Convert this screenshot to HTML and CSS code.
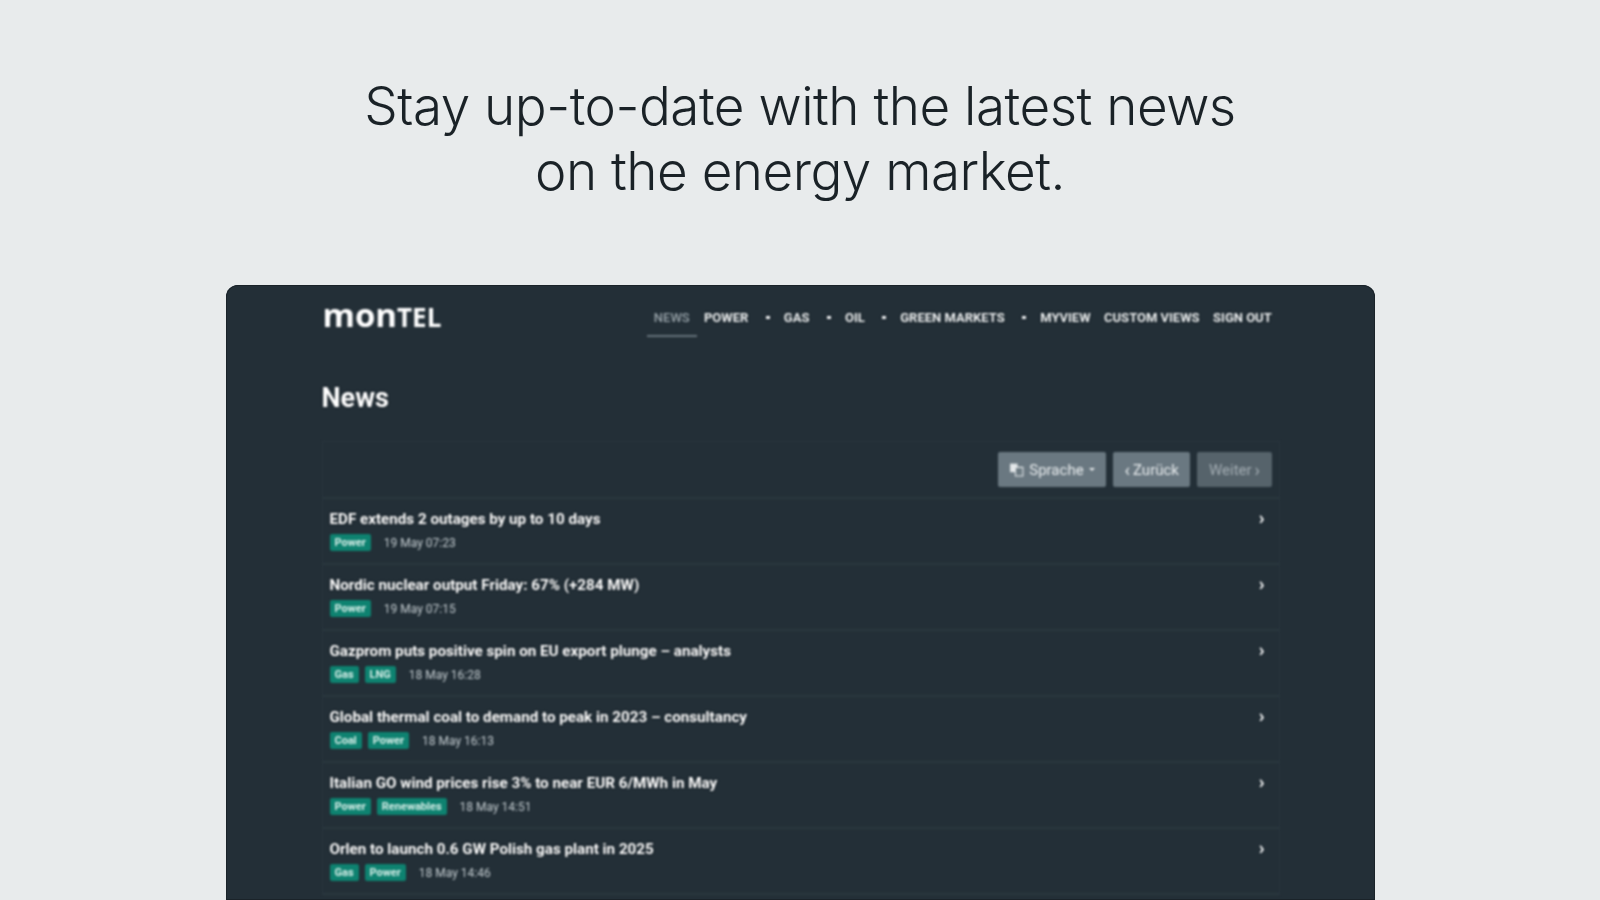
FILE: index.html
```html
<!DOCTYPE html>
<html lang="en">
<head>
  <meta charset="UTF-8" />
  <title>Montel News</title>
  <link rel="stylesheet" href="styles.css">
</head>
<body>
  <h1 class="headline">Stay up-to-date with the latest news<br>on the energy market.</h1>

  <div class="app">
    <div class="app-inner">
      <header class="topbar">
        <div class="logo"><span class="logo-low">mon</span>TEL</div>
        <nav class="nav">
          <a class="nav-link active">News</a>
          <a class="nav-link">Power</a><span class="nav-dot"></span>
          <a class="nav-link">Gas</a><span class="nav-dot"></span>
          <a class="nav-link">Oil</a><span class="nav-dot"></span>
          <a class="nav-link">Green Markets</a><span class="nav-dot"></span>
          <a class="nav-link">MyView</a>
          <a class="nav-link">Custom Views</a>
          <a class="nav-link">Sign Out</a>
        </nav>
      </header>

      <h2 class="page-title">News</h2>

      <div class="news-table">
        <div class="toolbar">
          <button class="btn btn-lang">
            <svg class="lang-icon" viewBox="0 0 14 14" width="15" height="15"><path d="M1 1.5h7v8H1z" fill="#e4e8ea"/><path d="M6 5h7v8H6z" fill="#6c7a82" stroke="#e4e8ea"/></svg>
            Sprache <span class="caret"></span>
          </button>
          <button class="btn"><span class="btn-arrow">‹</span> Zurück</button>
          <button class="btn btn-off">Weiter <span class="btn-arrow">›</span></button>
        </div>

        <div class="news-row">
          <div>
            <div class="news-title">EDF extends 2 outages by up to 10 days</div>
            <div class="news-meta"><span class="tag">Power</span><span class="news-date">19 May 07:23</span></div>
          </div>
          <span class="chev">›</span>
        </div>
        <div class="news-row">
          <div>
            <div class="news-title">Nordic nuclear output Friday: 67% (+284 MW)</div>
            <div class="news-meta"><span class="tag">Power</span><span class="news-date">19 May 07:15</span></div>
          </div>
          <span class="chev">›</span>
        </div>
        <div class="news-row">
          <div>
            <div class="news-title">Gazprom puts positive spin on EU export plunge – analysts</div>
            <div class="news-meta"><span class="tag">Gas</span><span class="tag">LNG</span><span class="news-date">18 May 16:28</span></div>
          </div>
          <span class="chev">›</span>
        </div>
        <div class="news-row">
          <div>
            <div class="news-title">Global thermal coal to demand to peak in 2023 – consultancy</div>
            <div class="news-meta"><span class="tag">Coal</span><span class="tag">Power</span><span class="news-date">18 May 16:13</span></div>
          </div>
          <span class="chev">›</span>
        </div>
        <div class="news-row">
          <div>
            <div class="news-title">Italian GO wind prices rise 3% to near EUR 6/MWh in May</div>
            <div class="news-meta"><span class="tag">Power</span><span class="tag">Renewables</span><span class="news-date">18 May 14:51</span></div>
          </div>
          <span class="chev">›</span>
        </div>
        <div class="news-row">
          <div>
            <div class="news-title">Orlen to launch 0.6 GW Polish gas plant in 2025</div>
            <div class="news-meta"><span class="tag">Gas</span><span class="tag">Power</span><span class="news-date">18 May 14:46</span></div>
          </div>
          <span class="chev">›</span>
        </div>
      </div>
    </div>
  </div>
</body>
</html>
```

FILE: styles.css
```css
html, body {
  margin: 0;
  height: 900px;
  overflow: hidden;
}

body {
  background: #e8ebec;
  font-family: Roboto, "Liberation Sans", sans-serif;
  display: flex;
  flex-direction: column;
  align-items: center;
}

.headline {
  margin: 74px 0 0;
  font-family: Inter, sans-serif;
  font-weight: 300;
  font-size: 53px;
  line-height: 65px;
  letter-spacing: -0.5px;
  text-align: center;
  color: #1a2227;
  filter: blur(0.5px);
}

.app {
  margin-top: 81px;
  width: 1149px;
  height: 615px;
  background: #232f37;
  border-radius: 12px 12px 0 0;
  box-shadow: inset 0 0 0 1px #1a2329;
  box-sizing: border-box;
  padding: 0 95px 0 96px;
  overflow: hidden;
}

.app-inner {
  filter: blur(0.8px);
}

.topbar {
  display: flex;
  justify-content: space-between;
  height: 52px;
}

.logo {
  margin: 14px 0 0 1px;
  font-family: "Open Sans", sans-serif;
  font-weight: 700;
  font-size: 26px;
  line-height: 32px;
  color: #fff;
  height: 32px;
}

.logo-low {
  font-size: 33px;
}

.nav {
  display: flex;
  align-items: flex-start;
  padding-right: 1px;
}

.nav-link {
  display: block;
  height: 35px;
  box-sizing: border-box;
  padding: 26px 6.75px 0;
  font-size: 13px;
  line-height: 14px;
  font-weight: 700;
  text-transform: uppercase;
  color: #f0f3f4;
  text-shadow: 0 0 2px #0c1318;
}

.nav-link.active {
  color: #9aa5ab;
  font-weight: 500;
  border-bottom: 2px solid #66737b;
  height: 52px;
  padding-right: 7.5px;
  text-shadow: none;
}

.nav-dot {
  width: 4px;
  height: 3px;
  margin: 31px 7px 0 11px;
  background: #f0f3f4;
  box-shadow: 0 0 2px #0c1318;
}

.page-title {
  margin: 45px 0 0;
  font-size: 27px;
  line-height: 32px;
  font-weight: 700;
  color: #fff;
  text-shadow: 0 0 2px #0c1318;
}

.news-table {
  margin: 27px 0 0;
  border: 1px solid #2a363e;
  border-width: 1px 1px 0;
}

.toolbar {
  display: flex;
  justify-content: flex-end;
  gap: 7px;
  height: 57px;
  box-sizing: border-box;
  padding: 10px 7px 0 0;
  border-bottom: 2px solid #2b3840;
}

.btn {
  display: flex;
  align-items: center;
  justify-content: center;
  gap: 3px;
  height: 35px;
  padding: 0 11.5px;
  border: none;
  border-radius: 2px;
  background: #6a7881;
  color: #e8ecee;
  font-family: inherit;
  font-size: 15px;
}

.btn-lang {
  gap: 5px;
}

.btn-off {
  background: #56636b;
  color: #a3adb3;
}

.btn-arrow {
  font-size: 18px;
  line-height: 18px;
}

.lang-icon {
  flex: none;
}

.caret {
  width: 0;
  height: 0;
  border-left: 3.5px solid transparent;
  border-right: 3.5px solid transparent;
  border-top: 3.5px solid #e8ecee;
}

.news-row {
  display: flex;
  justify-content: space-between;
  height: 66px;
  box-sizing: border-box;
  padding: 11px 14px 0 7px;
  border-bottom: 2px solid #2b3840;
}

.news-title {
  font-size: 15.2px;
  line-height: 18px;
  font-weight: 700;
  color: #fff;
  text-shadow: 0 0 2px #0c1318;
}

.news-meta {
  display: flex;
  align-items: center;
  margin-top: 6px;
  gap: 6px;
}

.tag {
  padding: 0 5px;
  height: 17px;
  line-height: 17px;
  background: #0e8270;
  color: #d8efe9;
  font-size: 11px;
  font-weight: 700;
  border-radius: 2px;
}

.news-date {
  margin-left: 7px;
  font-size: 12px;
  color: #c4ccd0;
}

.chev {
  font-size: 19px;
  line-height: 15px;
  font-weight: 700;
  color: #fff;
}
```
